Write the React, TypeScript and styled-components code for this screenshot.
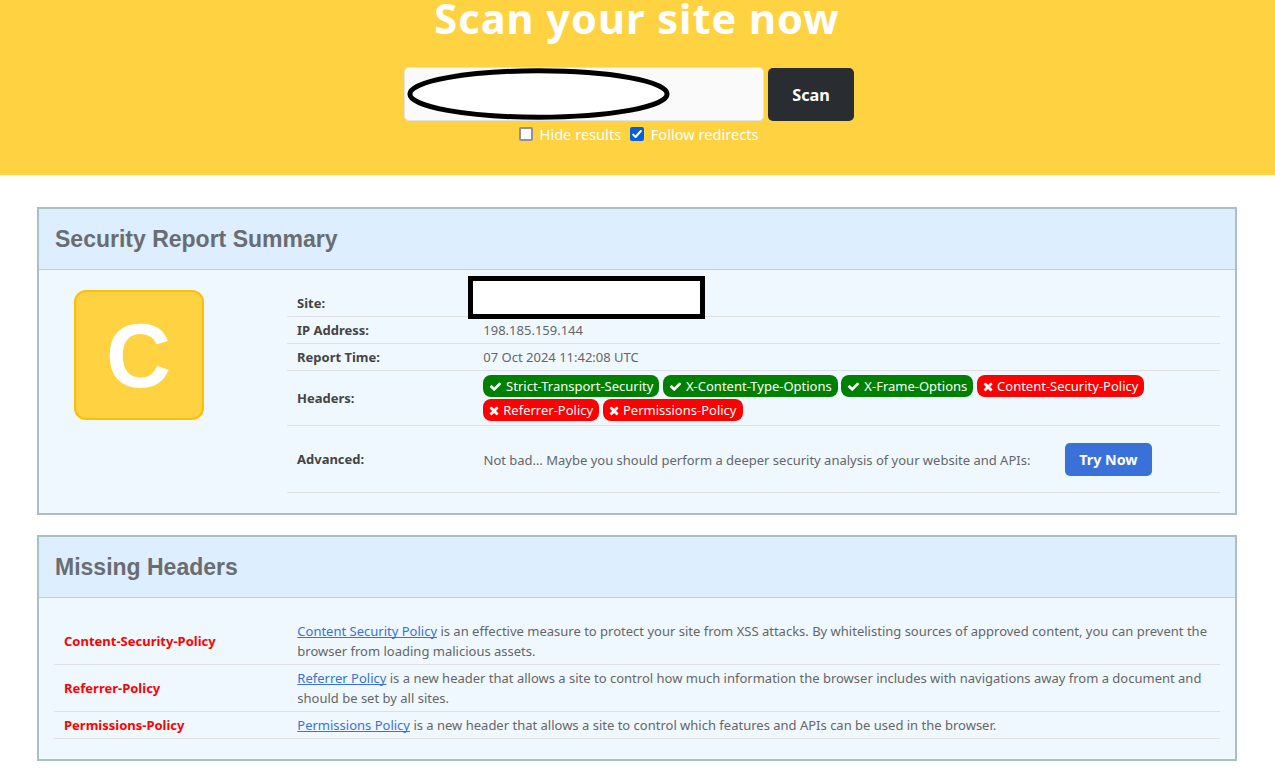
import React from "react";
import styled, { createGlobalStyle } from "styled-components";

const GlobalStyle = createGlobalStyle`
  * { box-sizing: border-box; }
  body {
    margin: 0;
    background: #fff;
    color: #666;
    font: 13px/20px "Noto Sans", "Open Sans", sans-serif;
  }
`;

const Page = styled.div`
  height: 768px;
  overflow: hidden;
`;

const Hero = styled.header`
  height: 175px;
  background: #ffd242;
  color: #fff;
  display: flex;
  flex-direction: column;
  align-items: center;
`;

const Title = styled.h1`
  margin: -11px 1px 0 0;
  height: 78px;
  font-size: 41.6px;
  line-height: 58px;
  font-weight: 700;
  letter-spacing: 0.95px;
  white-space: nowrap;
`;

const ScanForm = styled.form`
  display: flex;
  align-items: flex-end;
  gap: 4px;
  margin-right: 17px;
`;

const AddressField = styled.div`
  position: relative;
  width: 360px;
  height: 54px;
  background: #fafafa;
  border: 1px solid #e4e4e4;
  border-radius: 5px;
`;

const Redaction = styled.svg`
  position: absolute;
  left: 2px;
  top: 0;
  display: block;
`;

const ScanButton = styled.button`
  width: 86px;
  height: 53px;
  padding: 0;
  border: 0;
  border-radius: 5px;
  background: #292c30;
  color: #fff;
  font: 700 16.25px/22px "Noto Sans", sans-serif;
`;

const Options = styled.div`
  display: flex;
  gap: 8.6px;
  margin-top: 3px;
  margin-left: 2px;
  font-size: 14.6px;
  line-height: 21px;
`;

const Option = styled.label`
  display: flex;
  align-items: center;
  gap: 7px;
`;

const CheckBox = styled.span<{ $on?: boolean }>`
  width: 14px;
  height: 14px;
  margin-bottom: 1px;
  border-radius: 2px;
  border: 2px solid ${(p) => (p.$on ? "#0060df" : "#8f8f9d")};
  background: ${(p) => (p.$on ? "#0060df" : "#fff")};
  svg { display: block; }
`;

const Main = styled.main`
  display: flex;
  flex-direction: column;
  gap: 20px;
  width: 1200px;
  margin: 32px 0 0 37px;
`;

const Panel = styled.section`
  border: 2px solid #a9c0c3;
  background: #eff8ff;
`;

const PanelTitle = styled.h2`
  margin: 0;
  height: 61px;
  padding: 0 16px;
  border-bottom: 1px solid #c0d0d8;
  background: #dceeff;
  font: 700 23px/60px "Liberation Sans", Arial, sans-serif;
  color: #6a6c70;
`;

const PanelBody = styled.div`
  display: flex;
  padding: 20px 15px;
`;

const Grade = styled.div`
  width: 130px;
  height: 130px;
  margin: 0 83px 0 20px;
  flex: none;
  border: 2px solid #ffbe05;
  border-radius: 12px;
  background: #ffd242;
  color: #fff;
  text-align: center;
  font: 700 90px/128px "Liberation Sans", Arial, sans-serif;
  text-indent: -1px;
`;

const Rows = styled.div`
  flex: 1;
  min-width: 0;
`;

const Row = styled.div<{ $label: number; $height?: number }>`
  display: grid;
  grid-template-columns: ${(p) => p.$label}px 1fr;
  align-items: center;
  min-height: ${(p) => p.$height ?? 27}px;
  padding: 3px 10px;
  border-bottom: 1px solid #dee0e3;
`;

const Label = styled.div<{ $alert?: boolean }>`
  font-weight: 700;
  color: ${(p) => (p.$alert ? "#f00" : "#444")};
`;

const Value = styled.div`
  position: relative;
`;

const SiteCover = styled.div`
  position: absolute;
  left: -16px;
  top: -27px;
  width: 237px;
  height: 42.5px;
  border: 5px solid #000;
  background: #fff;
`;

const Pills = styled.div`
  display: flex;
  flex-wrap: wrap;
  gap: 2px 3.4px;
  width: 700px;
  padding: 1px 0;
`;

const Pill = styled.span<{ $ok: boolean }>`
  display: flex;
  align-items: center;
  height: 22px;
  padding: 0 6.1px;
  gap: 4px;
  border-radius: 8px;
  color: #fff;
  white-space: nowrap;
  background: ${(p) => (p.$ok ? "#008000" : "#f00")};
`;

const Advice = styled.div`
  display: flex;
  align-items: center;
`;

const AdviceText = styled.span`
  padding-top: 2px;
`;

const TryButton = styled.button`
  width: 87px;
  height: 33px;
  margin-left: 35px;
  padding: 1px 1px 0 0;
  border: 0;
  border-radius: 5px;
  background: #3a71d9;
  color: #fff;
  font: 700 14.3px/20px "Noto Sans", sans-serif;
`;

const Link = styled.a`
  color: #3a71d9;
  text-decoration: underline;
  text-decoration-skip-ink: none;
`;

const CheckIcon = () => (
  <svg width="13" height="13" viewBox="0 0 1792 1792" fill="currentColor">
    <path d="M1671 566q0 40-28 68l-724 724-136 136q-28 28-68 28t-68-28l-136-136-362-362q-28-28-28-68t28-68l136-136q28-28 68-28t68 28l294 295 656-657q28-28 68-28t68 28l136 136q28 28 28 68z" />
  </svg>
);

const CrossIcon = () => (
  <svg width="10.2" height="13" viewBox="192 0 1408 1792" fill="currentColor">
    <path d="M1490 1322q0 40-28 68l-136 136q-28 28-68 28t-68-28l-294-294-294 294q-28 28-68 28t-68-28l-136-136q-28-28-28-68t28-68l294-294-294-294q-28-28-28-68t28-68l136-136q28-28 68-28t68 28l294 294 294-294q28-28 68-28t68 28l136 136q28 28 28 68t-28 68l-294 294 294 294q28 28 28 68z" />
  </svg>
);

const headers = [
  { name: "Strict-Transport-Security", ok: true },
  { name: "X-Content-Type-Options", ok: true },
  { name: "X-Frame-Options", ok: true },
  { name: "Content-Security-Policy", ok: false },
  { name: "Referrer-Policy", ok: false },
  { name: "Permissions-Policy", ok: false },
];

const missing = [
  {
    name: "Content-Security-Policy",
    link: "Content Security Policy",
    text: " is an effective measure to protect your site from XSS attacks. By whitelisting sources of approved content, you can prevent the browser from loading malicious assets.",
  },
  {
    name: "Referrer-Policy",
    link: "Referrer Policy",
    text: " is a new header that allows a site to control how much information the browser includes with navigations away from a document and should be set by all sites.",
  },
  {
    name: "Permissions-Policy",
    link: "Permissions Policy",
    text: " is a new header that allows a site to control which features and APIs can be used in the browser.",
  },
];

export default function App() {
  return (
    <Page>
      <GlobalStyle />
      <Hero>
        <Title>Scan your site now</Title>
        <ScanForm>
          <AddressField>
            <Redaction width="264" height="54" viewBox="0 0 264 54">
              <ellipse cx="131.5" cy="26" rx="128.6" ry="23.2" fill="#fff" stroke="#000" strokeWidth="5" />
            </Redaction>
          </AddressField>
          <ScanButton type="button">Scan</ScanButton>
        </ScanForm>
        <Options>
          <Option>
            <CheckBox />
            Hide results
          </Option>
          <Option>
            <CheckBox $on>
              <svg width="10" height="10" viewBox="0 0 10 10" fill="none" stroke="#fff" strokeWidth="2" strokeLinecap="round" strokeLinejoin="round">
                <path d="M1.2 5.6L3.6 8L8.8 2" />
              </svg>
            </CheckBox>
            Follow redirects
          </Option>
        </Options>
      </Hero>
      <Main>
        <Panel>
          <PanelTitle>Security Report Summary</PanelTitle>
          <PanelBody>
            <Grade>C</Grade>
            <Rows>
              <Row $label={186.5}>
                <Label>Site:</Label>
                <Value>
                  <SiteCover />
                </Value>
              </Row>
              <Row $label={186.3}>
                <Label>IP Address:</Label>
                <Value>198.185.159.144</Value>
              </Row>
              <Row $label={186.3}>
                <Label>Report Time:</Label>
                <Value>07 Oct 2024 11:42:08 UTC</Value>
              </Row>
              <Row $label={186} $height={55}>
                <Label>Headers:</Label>
                <Pills>
                  {headers.map((h) => (
                    <Pill key={h.name} $ok={h.ok}>
                      {h.ok ? <CheckIcon /> : <CrossIcon />}
                      {h.name}
                    </Pill>
                  ))}
                </Pills>
              </Row>
              <Row $label={186.5} $height={67}>
                <Label>Advanced:</Label>
                <Advice>
                  <AdviceText>
                    Not bad… Maybe you should perform a deeper security analysis of your website and APIs:
                  </AdviceText>
                  <TryButton type="button">Try Now</TryButton>
                </Advice>
              </Row>
            </Rows>
          </PanelBody>
        </Panel>
        <Panel>
          <PanelTitle>Missing Headers</PanelTitle>
          <PanelBody>
            <Rows>
              {missing.map((m) => (
                <Row key={m.name} $label={233.3}>
                  <Label $alert>{m.name}</Label>
                  <Value>
                    <Link>{m.link}</Link>
                    {m.text}
                  </Value>
                </Row>
              ))}
            </Rows>
          </PanelBody>
        </Panel>
      </Main>
    </Page>
  );
}
